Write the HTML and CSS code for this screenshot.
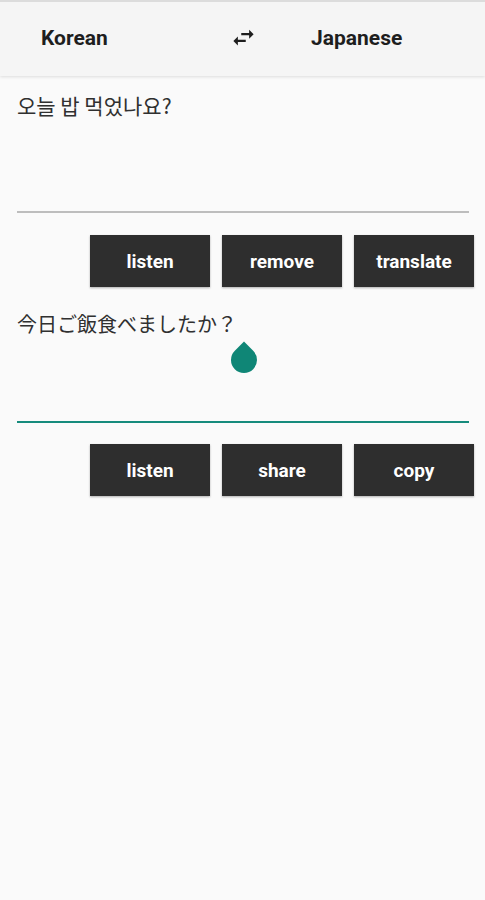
FILE: index.html
```html
<!DOCTYPE html>
<html lang="en">
<head>
    <meta charset="UTF-8">
    <meta name="viewport" content="width=device-width, initial-scale=1.0">
    <title>Translator</title>
    <link rel="stylesheet" href="styles.css">
</head>
<body>

<header class="lang-bar">
    <span class="lang lang-from">Korean</span>
    <svg class="swap-icon" viewBox="0 0 24 24" width="27" height="27">
        <path d="M6.99 11L3 15l3.99 4v-3H14v-2H6.99v-3zM21 9l-3.99-4v3H10v2h7.01v3L21 9z"/>
    </svg>
    <span class="lang lang-to">Japanese</span>
</header>

<div class="field source">
    <p class="field-text">오늘 밥 먹었나요?</p>
</div>

<div class="actions">
    <button type="button">listen</button>
    <button type="button">remove</button>
    <button type="button">translate</button>
</div>

<div class="field result">
    <p class="field-text">今日ご飯食べましたか？</p>
    <span class="cursor-handle"></span> <!-- text selection handle -->
</div>

<div class="actions">
    <button type="button">listen</button>
    <button type="button">share</button>
    <button type="button">copy</button>
</div>

</body>
</html>
```

FILE: styles.css
```css
body {
    margin: 0;
    font-family: Roboto, "Noto Sans", sans-serif;
    background-color: #fafafa;
    border-top: 2px solid #dcdcdc;
    min-height: 898px;
}

.lang-bar {
    display: flex;
    align-items: center;
    box-sizing: border-box;
    height: 74px;
    padding: 0 0 3px 41px;
    background-color: #f5f5f5;
    box-shadow: 0 1px 3px rgba(0, 0, 0, 0.12);
}

.lang {
    font-size: 21px;
    font-weight: 700;
    color: #1e1e1e;
}

.lang-from {
    width: 189px;
}

.swap-icon {
    fill: #1e1e1e;
    margin-right: 54px;
}

.field {
    position: relative;
    box-sizing: border-box;
    height: 137px;
    margin: 0 16px 0 17px;
    padding-top: 15px;
    border-bottom: 2px solid #bdbdbd;
}

.field-text {
    margin: 0;
    font-family: "Noto Sans CJK KR", "Noto Sans CJK JP", sans-serif;
    font-size: 21px;
    line-height: 28px;
    color: #303030;
}

.result {
    height: 136px;
    padding-top: 23px;
    border-bottom-color: #168b7c;
}

.result .field-text {
    font-family: "Noto Sans CJK JP", sans-serif;
    font-size: 20px;
}

.cursor-handle {
    position: absolute;
    left: 214px;
    top: 60px;
    width: 26px;
    height: 26px;
    background-color: #0f8676;
    border-radius: 0 50% 50% 50%;
    transform: rotate(45deg);
}

.actions {
    display: flex;
    justify-content: flex-end;
    gap: 12px;
    margin-top: 22px;
    padding-right: 11px;
}

.result + .actions {
    margin-top: 21px;
}

.actions button {
    width: 120px;
    height: 52px;
    border: none;
    background-color: #2e2e2e;
    color: white;
    font-family: Roboto, sans-serif;
    font-size: 19px;
    font-weight: 700;
    box-shadow: 0 1px 2px rgba(0, 0, 0, 0.3);
    cursor: pointer;
}
```
